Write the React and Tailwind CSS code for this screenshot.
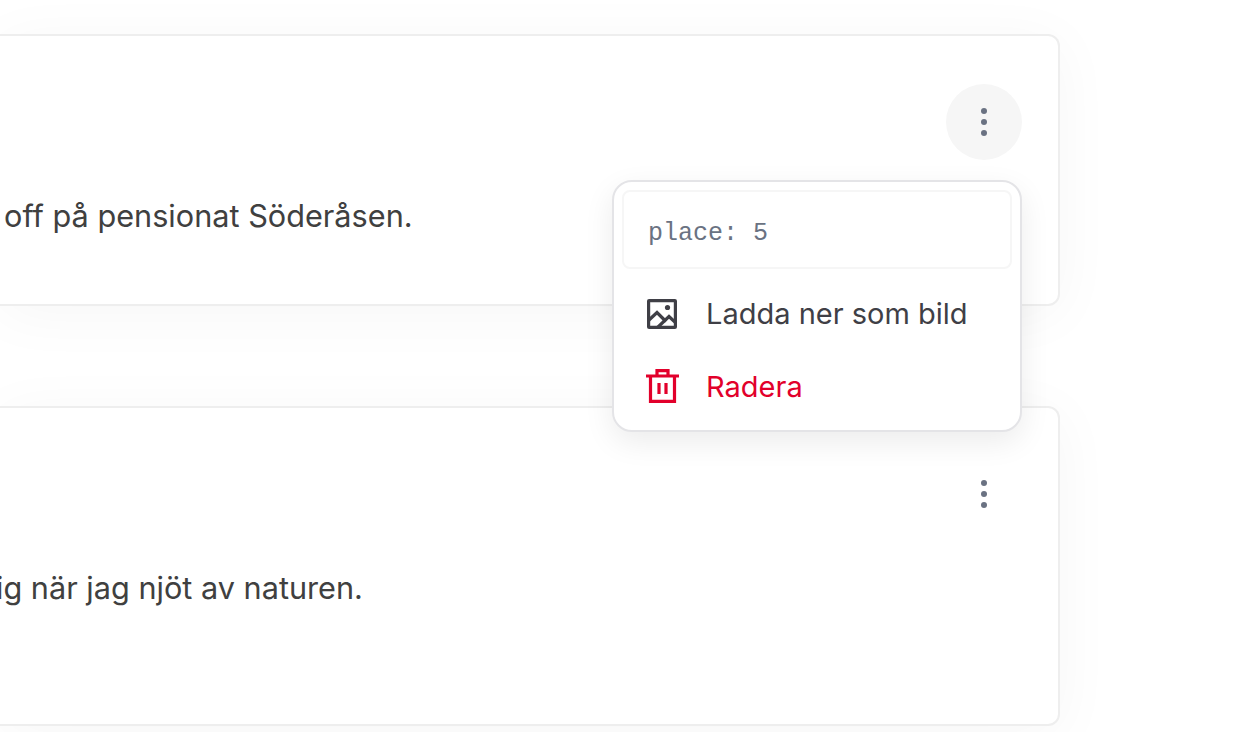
const DotsIcon = () => (
  <svg width="8" height="32" viewBox="0 0 8 32" className="text-gray-500" fill="currentColor">
    <circle cx="4" cy="5" r="3" />
    <circle cx="4" cy="16" r="3" />
    <circle cx="4" cy="27" r="3" />
  </svg>
);

const ImageIcon = () => (
  <svg width="30" height="30" viewBox="0 0 30 30" fill="none" stroke="#3f3f46" strokeWidth="3.2">
    <rect x="1.6" y="1.6" width="26.8" height="26.8" rx="0.5" />
    <path d="M2 21 L10 13.5 L19 22.5" />
    <path d="M10 29 L22 17.5 L29 24" />
    <circle cx="20.5" cy="8.5" r="2.6" fill="#3f3f46" stroke="none" />
  </svg>
);

const TrashIcon = () => (
  <svg width="33" height="34" viewBox="0 0 33 34" fill="none" stroke="#e2002b" strokeWidth="3.2">
    <path d="M0 7 H33" />
    <path d="M11 7 V1.6 H22 V7" />
    <path d="M4.5 7 V32.4 H28.5 V7" />
    <path d="M13 14 V25 M20 14 V25" />
  </svg>
);

const Card = ({ height, children, text, textMargin, active }) => (
  <div
    className="relative w-[1060px] rounded-r-xl border-2 border-l-0 border-[#eeeeee] bg-white shadow-[0_8px_60px_rgba(0,0,0,0.04)]"
    style={{ height }}
  >
    <div className="flex justify-end pt-[48px] pr-[36px]">
      <button
        className={`flex h-[76px] w-[76px] items-center justify-center rounded-full ${
          active ? "bg-[#f6f6f6]" : ""
        }`}
      >
        <DotsIcon />
      </button>
    </div>
    <p
      className="mt-[36px] text-[30.67px] leading-[40px] whitespace-nowrap text-[#404040]"
      style={{ marginLeft: textMargin }}
    >
      {text}
    </p>
    {children}
  </div>
);

export default function App() {
  return (
    <div className="h-[732px] overflow-hidden bg-white pt-[34px] font-['Inter',sans-serif]">
      <Card height={272} text="off på pensionat Söderåsen." textMargin={4} active>
        <div className="absolute top-[144px] left-[612px] z-10 flex h-[252px] w-[410px] flex-col rounded-[20px] border-2 border-[#e4e4e7] bg-white p-[8px] shadow-[0_10px_30px_rgba(0,0,0,0.08)]">
          <div className="flex h-[80px] items-center rounded-lg border-2 border-[#f6f6f6] px-[24px] pt-[8px] font-['Liberation_Mono',monospace] text-[25px] text-gray-500">
            place: 5
          </div>
          <div className="mt-[9px] flex h-[72px] items-center gap-[29px] pl-[25px] text-[29px] text-[#3f3f46]">
            <ImageIcon />
            <span>Ladda ner som bild</span>
          </div>
          <div className="mt-[1px] flex h-[72px] items-center gap-[27px] pl-[24px] text-[29px] text-[#e2002b]">
            <TrashIcon />
            <span>Radera</span>
          </div>
        </div>
      </Card>
      <div className="mt-[100px]">
        <Card height={320} text="ig när jag njöt av naturen." textMargin={-4} />
      </div>
    </div>
  );
}
